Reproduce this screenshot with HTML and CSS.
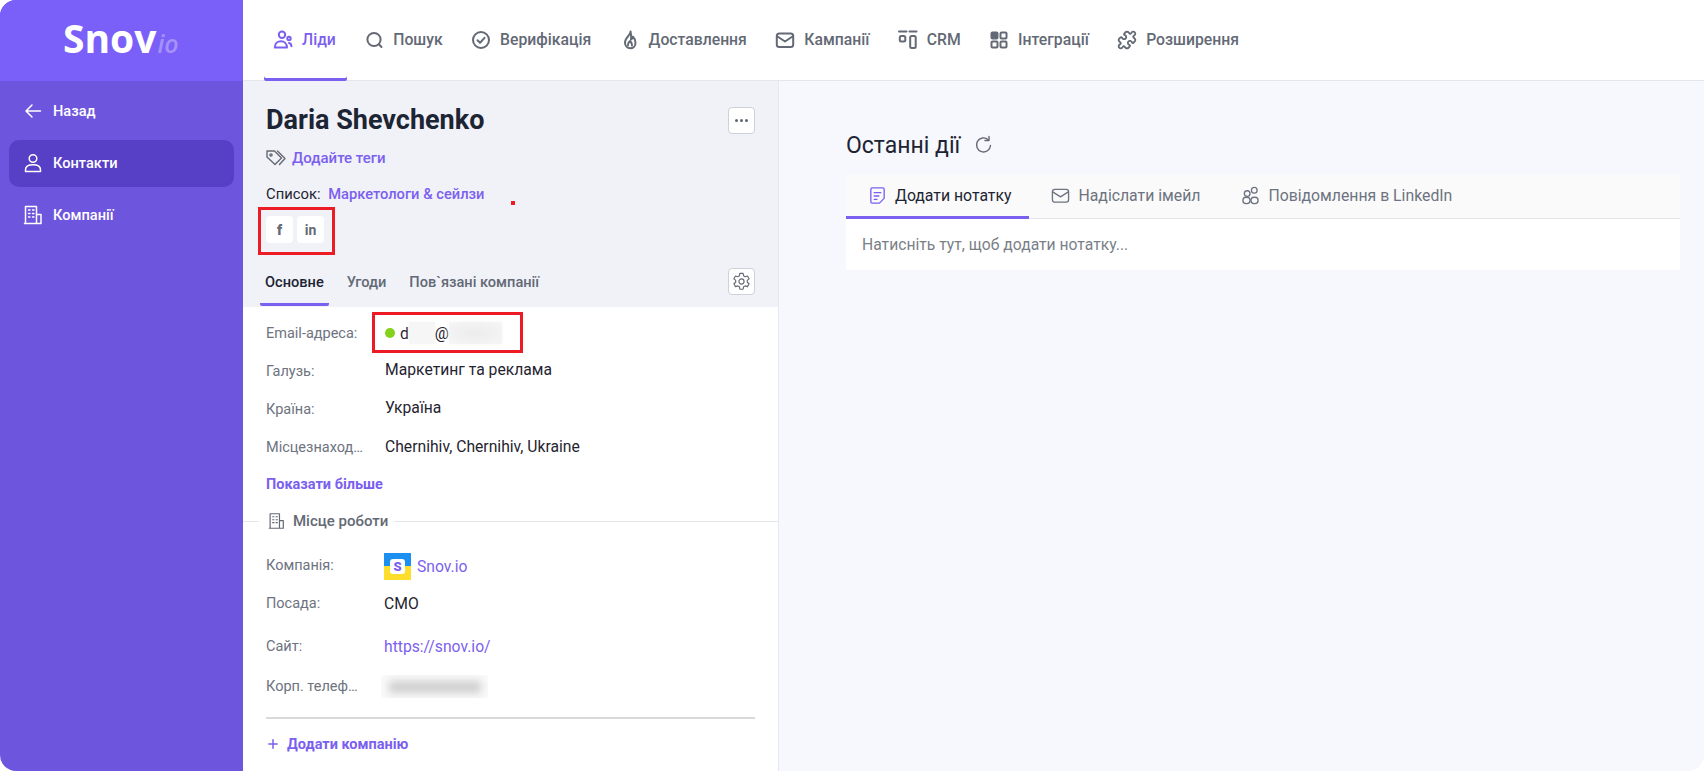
FILE: index.html
```html
<!DOCTYPE html>
<html lang="uk">
<head>
<meta charset="utf-8">
<title>Snov.io</title>
<link rel="stylesheet" href="styles.css">
</head>
<body>
<div class="app">
  <aside class="sidebar">
    <div class="logo"><span class="logo-main">Snov</span><span class="logo-io">io</span></div>
    <nav class="side-nav">
      <a class="side-item">
        <svg class="side-icon" viewBox="0 0 20 20"><path d="M17.500 10H3M9 4l-6 6 6 6"/></svg>Назад
      </a>
      <a class="side-item is-active">
        <svg class="side-icon" viewBox="0 0 20 20"><circle cx="10" cy="5.500" r="3.800"/><path d="M2.500 18.500v-1.700c0-3 2.800-5 7.500-5s7.500 2 7.500 5v1.700z"/></svg>Контакти
      </a>
      <a class="side-item">
        <svg class="side-icon" viewBox="0 0 20 20"><path d="M2.500 18.500V1.500h11v17zM13.500 9.500h4.500v9H1.500"/><path class="thick" d="M5.500 5h1.500M9.500 5h1.500M5.500 8.500h1.500M9.500 8.500h1.500M5.500 12h1.500M9.500 12h1.500"/></svg>Компанії
      </a>
    </nav>
  </aside>
  <div class="main">
    <header class="topbar">
      <a class="top-item is-active">
        <svg class="top-icon" viewBox="0 0 20 20"><circle cx="9" cy="4.800" r="3.200"/><path d="M1.800 17.500c0-4 3-6.300 6.200-6.300s5.800 2.300 6 6.300z"/><circle cx="16" cy="8.500" r="1.700"/><path d="M16 13c1.500.3 2.300 1.500 2.400 3.300"/></svg>Ліди
      </a>
      <a class="top-item">
        <svg class="top-icon" viewBox="0 0 20 20"><circle cx="10" cy="9.500" r="6.600"/><path d="M14.800 14.200l2.700 2.800"/></svg>Пошук
      </a>
      <a class="top-item">
        <svg class="top-icon" viewBox="0 0 20 20"><circle cx="10" cy="10" r="8"/><path d="M6.500 10.300l2.500 2.500 4.500-5"/></svg>Верифікація
      </a>
      <a class="top-item">
        <svg class="top-icon" viewBox="0 0 20 20"><path d="M10.500 1.500c.5 3.500-5.500 6-5.500 11 0 3.300 2.300 5.800 5.300 5.800s5.200-2.400 5.200-5.600c0-2.500-1-4.500-2.500-6-.3 1.400-1 2.400-2 2.800.6-2.800 0-6-.5-8z"/><path d="M8 15.500c-.6-2 .8-3 2-4.500 1 1.200 2.500 2.500 2 4.500"/></svg>Доставлення
      </a>
      <a class="top-item">
        <svg class="top-icon" viewBox="0 0 20 20"><rect x="1.800" y="3.500" width="16.400" height="13.500" rx="2.500"/><path d="M2.500 6.500l7.500 5 7.500-5"/></svg>Кампанії
      </a>
      <a class="top-item">
        <svg class="top-icon" viewBox="0 0 20 20"><path d="M1 1.500h7.500M11.500 1.500h7"/><rect x="1.800" y="6" width="5.500" height="5.500" rx="1.500"/><rect x="12.200" y="6" width="5.500" height="12" rx="1.500"/></svg>CRM
      </a>
      <a class="top-item">
        <svg class="top-icon" viewBox="0 0 20 20"><rect class="solid" x="2.500" y="2.500" width="6" height="6" rx="1"/><rect x="11.500" y="2.500" width="6" height="6" rx="1"/><rect x="2.500" y="11.500" width="6" height="6" rx="1"/><rect x="11.500" y="11.500" width="6" height="6" rx="1"/></svg>Інтеграції
      </a>
      <a class="top-item">
        <svg class="top-icon puzzle" viewBox="0 0 24 24"><path d="M19.439 7.85c-.049.322.059.648.289.878l1.568 1.568c.47.47.706 1.087.706 1.704s-.235 1.233-.706 1.704l-1.611 1.611a.98.98 0 0 1-.837.276c-.47-.07-.802-.48-.968-.925a2.501 2.501 0 1 0-3.214 3.214c.446.166.855.497.925.968a.979.979 0 0 1-.276.837l-1.61 1.61a2.404 2.404 0 0 1-1.705.707 2.402 2.402 0 0 1-1.704-.706l-1.568-1.568a1.026 1.026 0 0 0-.877-.29c-.493.074-.84.504-1.02.968a2.5 2.5 0 1 1-3.237-3.237c.464-.18.894-.527.967-1.02a1.026 1.026 0 0 0-.289-.877l-1.568-1.568A2.402 2.402 0 0 1 1.998 12c0-.617.236-1.234.706-1.704L4.230 8.770c.24-.24.581-.353.917-.303.515.077.877.528 1.073 1.01a2.500 2.500 0 1 0 3.259-3.259c-.482-.196-.933-.558-1.010-1.073-.05-.336.062-.676.303-.917l1.525-1.525A2.402 2.402 0 0 1 12 1.998c.617 0 1.234.236 1.704.706l1.568 1.568c.23.23.556.338.877.29.493-.074.84-.504 1.020-.968a2.500 2.500 0 1 1 3.237 3.237c-.464.18-.894.527-.967 1.020Z"/></svg>Розширення
      </a>
    </header>
    <div class="content">
      <section class="panel">
        <div class="panel-head">
          <div class="name-row">
            <h1 class="name">Daria Shevchenko</h1>
            <button class="square-btn"><span class="dots"><i></i><i></i><i></i></span></button>
          </div>
          <a class="tags">
            <svg class="tag-icon" viewBox="0 0 20 20"><path d="M1 3h7.500l7 7-6.500 6.500L1 9z"/><path d="M11.500 3l7.500 7.500-5.500 6"/><circle cx="5" cy="7" r="1.100"/></svg>Додайте теги
          </a>
          <p class="list-line">Список: <a class="link strong">Маркетологи &amp; сейлзи</a></p>
          <div class="socials">
            <a class="social"><span class="fb">f</span></a>
            <a class="social"><span class="in">in</span></a>
          </div>
          <div class="tabs">
            <a class="tab is-active">Основне</a>
            <a class="tab">Угоди</a>
            <a class="tab">Пов`язані компанії</a>
            <button class="square-btn gear">
              <svg class="gear-icon" viewBox="0 0 20 20"><path d="M8.300 1.500h3.400l.5 2.500 1.700 1 2.400-.8 1.700 3-1.900 1.600v2l1.900 1.600-1.700 3-2.400-.8-1.700 1-.5 2.500H8.300l-.5-2.500-1.700-1-2.400.8-1.700-3 1.900-1.600v-2L2 7.200l1.700-3 2.400.8 1.700-1z"/><circle cx="10" cy="10" r="2.700"/></svg>
            </button>
          </div>
        </div>
        <div class="panel-body">
          <div class="row">
            <span class="label">Email-адреса:</span>
            <span class="value email"><i class="dot"></i>d<i class="blur blur-a"></i>@<i class="blur blur-b"></i></span>
          </div>
          <div class="row">
            <span class="label">Галузь:</span>
            <span class="value raised">Маркетинг та реклама</span>
          </div>
          <div class="row">
            <span class="label">Країна:</span>
            <span class="value raised">Україна</span>
          </div>
          <div class="row">
            <span class="label">Місцезнаход…</span>
            <span class="value raised-1">Chernihiv, Chernihiv, Ukraine</span>
          </div>
          <a class="link strong more">Показати більше</a>
          <div class="section-title">
            <svg class="section-icon" viewBox="0 0 20 20"><path d="M2.500 18.500V1.500h11v17zM13.500 9.500h4.500v9H1.500"/><path class="thick" d="M5.500 5h1.500M9.500 5h1.500M5.500 8.500h1.500M9.500 8.500h1.500M5.500 12h1.500M9.500 12h1.500"/></svg>
            <span>Місце роботи</span>
          </div>
          <div class="work">
            <div class="row">
              <span class="label">Компанія:</span>
              <span class="value company"><span class="co-logo"><span class="co-s">S</span></span><a class="link">Snov.io</a></span>
            </div>
            <div class="row">
              <span class="label">Посада:</span>
              <span class="value">CMO</span>
            </div>
            <div class="row row-site">
              <span class="label">Сайт:</span>
              <a class="value link">https://snov.io/</a>
            </div>
            <div class="row row-phone">
              <span class="label">Корп. телеф…</span>
              <span class="phone"><i></i></span>
            </div>
          </div>
          <a class="add-company link strong">
            <svg class="plus" viewBox="0 0 12 12"><path d="M6 1v10M1 6h10"/></svg>Додати компанію
          </a>
        </div>
      </section>
      <section class="activity">
        <div class="activity-title">
          <h2>Останні дії</h2>
          <svg class="refresh" viewBox="0 0 20 20"><path d="M16.500 10.500a7 7 0 1 1-2.300-5.800"/><path d="M15 1.500v4h-4"/></svg>
        </div>
        <div class="card">
          <div class="card-tabs">
            <a class="card-tab is-active">
              <svg class="card-icon" viewBox="0 0 20 20"><path d="M4.500 2h11A1.500 1.500 0 0 1 17 3.500V13l-5 5H4.500A1.500 1.500 0 0 1 3 16.500v-13A1.500 1.500 0 0 1 4.500 2z"/><path d="M6.500 7h7M6.500 10.500h5M6.500 14h3"/></svg>Додати нотатку
            </a>
            <a class="card-tab">
              <svg class="card-icon" viewBox="0 0 20 20"><rect x="1.500" y="3.500" width="17" height="13.500" rx="2.500"/><path d="M2.200 6.500l7.800 5 7.800-5"/></svg>Надіслати імейл
            </a>
            <a class="card-tab">
              <svg class="card-icon" viewBox="0 0 20 20"><circle cx="6.500" cy="8" r="3"/><circle cx="14" cy="4.500" r="3"/><rect x="2" y="11.800" width="7.500" height="6.700" rx="3.300"/><rect x="10.500" y="11.800" width="7.500" height="6.700" rx="3.300"/></svg>Повідомлення в LinkedIn
            </a>
          </div>
          <div class="card-body">Натисніть тут, щоб додати нотатку...</div>
        </div>
      </section>
    </div>
  </div>
  <div class="mark mark-social"></div>
  <div class="mark mark-email"></div>
  <div class="mark-dot"></div>
</div>
</body>
</html>
```
FILE: styles.css
```css
* { box-sizing: border-box; }
html, body { margin: 0; height: 100%; background: #fff; }
body { font-family: Roboto, "Noto Sans", sans-serif; font-size: 14px; color: #1f2430; }
a { text-decoration: none; color: inherit; }
svg { display: block; fill: none; stroke: currentColor; stroke-linecap: round; stroke-linejoin: round; flex: none; }

.app { position: relative; display: flex; width: 1704px; height: 771px; overflow: hidden; border-radius: 16px; }

/* sidebar */
.sidebar { width: 243px; flex: none; background: #6e55dd; color: #fff; }
.logo { height: 81px; background: #7b5ff9; padding: 11px 0 0 63px; display: flex; align-items: baseline; font-family: "Open Sans", sans-serif; }
.logo-main { font-size: 39px; font-weight: 700; line-height: 54px; }
.logo-io { font-size: 25px; font-weight: 600; font-style: italic; color: rgba(255,255,255,.32); margin-left: 1px; }
.side-nav { padding: 7px 9px; display: flex; flex-direction: column; gap: 5px; }
.side-item { height: 47px; display: flex; align-items: center; gap: 10px; padding: 0 0 2px 14px; border-radius: 10px; font-weight: 500; font-size: 14.600px; }
.side-item.is-active { background: #573fc6; }
.side-icon { width: 20px; height: 20px; stroke-width: 1.500; }
.thick { stroke-width: 1.400; }

/* main */
.main { flex: 1; min-width: 0; display: flex; flex-direction: column; }
.topbar { height: 81px; flex: none; background: #fff; border-bottom: 1px solid #e4e6ec; padding-left: 21px; display: flex; }
.top-item { height: 81px; display: flex; align-items: center; gap: 9px; padding: 0 12px 2px 9px; margin-right: 7.400px; font-size: 15.750px; font-weight: 500; color: #636975; }
.top-item.is-active { color: #7b5fef; box-shadow: inset 0 -3px 0 #7b5fef; border-radius: 0 0 2px 2px; padding-right: 11px; margin-right: 8.400px; }
.top-icon { width: 20px; height: 20px; stroke-width: 2; }
.puzzle { stroke-width: 2.200; }
.solid { fill: currentColor; }

.content { flex: 1; display: flex; min-height: 0; }

/* left panel */
.panel { width: 536px; flex: none; background: #fff; border-right: 1px solid #e6e8ef; }
.panel-head { height: 226px; background: #f0f2f8; padding: 26px 23px 0 23px; }
.name-row { display: flex; align-items: center; justify-content: space-between; height: 27px; margin-bottom: 14px; }
.name { margin: 0; font-size: 27px; font-weight: 700; line-height: 27px; color: #1d2433; }
.square-btn { width: 27px; height: 27px; padding: 0; background: #fff; border: 1px solid #cfd1d8; border-radius: 4px; display: flex; align-items: center; justify-content: center; color: #636975; }
.dots { display: flex; gap: 2px; }
.dots i { width: 3px; height: 3px; border-radius: 50%; background: #5e6675; }
.tags { display: flex; align-items: center; gap: 6px; height: 20px; color: #7b5fef; font-weight: 500; font-size: 15px; }
.tag-icon { width: 20px; height: 20px; stroke-width: 1.400; color: #636975; }
.link { color: #7b5fef; }
.strong { font-weight: 500; }
.list-line { margin: 16px 0 0; line-height: 20px; font-size: 14.800px; color: #1f2430; }
.list-line .link { margin-left: 4px; font-size: 14.700px; }
.socials { display: flex; gap: 4px; margin-top: 12px; }
.social { width: 27px; height: 27px; background: #fff; border-radius: 4px; display: flex; align-items: center; justify-content: center; color: #636975; font-weight: 700; font-size: 14px; }
.fb { font-size: 14px; font-weight: 900; }
.tabs { display: flex; align-items: flex-start; gap: 13px; margin: 25px 0 0 -6px; }
.tab { height: 38px; padding: 0 5px; color: #636975; font-weight: 500; font-size: 14.600px; line-height: 28px; }
.tab.is-active { color: #1d2433; border-bottom: 3px solid #7b5fef; border-radius: 0 0 2px 2px; }
.gear { margin-left: auto; }
.gear-icon { width: 19px; height: 19px; stroke-width: 1.200; }

.panel-body { padding: 7px 23px 0 23px; }
.row { display: flex; align-items: center; height: 38px; }
.label { width: 119px; flex: none; color: #6d7380; font-size: 14.500px; }
.value { font-size: 15.700px; color: #1f2430; }
.value.link { color: #7b5fef; }
.raised { margin-bottom: 4px; }
.raised-1 { margin-bottom: 2px; }
.email { display: flex; align-items: center; }
.dot { width: 10px; height: 10px; border-radius: 50%; background: #84d11e; margin-right: 5px; }
.blur { display: block; background: #f6f6f6; box-shadow: 0 0 3px #f6f6f6; }
.blur-a { width: 26px; height: 22px; }
.blur-b { width: 53px; height: 22px; background: radial-gradient(ellipse at center, #ececec, #f6f6f6); box-shadow: 0 0 4px #f6f6f6; }
.more { display: block; line-height: 20px; margin-top: 9px; font-size: 14.500px; font-weight: 700; }
.section-title { display: flex; align-items: center; gap: 8px; height: 20px; margin: 16px -23px 0 -23px; padding-left: 25px; color: #636975; font-size: 15px; font-weight: 500; background: linear-gradient(#e4e6ea, #e4e6ea) 0 50% / 100% 1px no-repeat; }
.section-title span { background: #fff; padding: 0 6px 0 8px; margin-left: -8px; }
.section-title svg { box-sizing: content-box; background: #fff; padding: 0 0 0 9px; margin-left: -9px; }
.section-icon { width: 17px; height: 18px; stroke-width: 1.400; }
.work { margin-top: 15px; }
.work .value { margin-left: -1px; }
.company { display: flex; align-items: center; gap: 6px; margin-bottom: -2px; }
.co-logo { width: 27px; height: 27px; display: flex; align-items: center; justify-content: center; background: linear-gradient(#1c8ff0 50%, #fdde2d 50%); }
.co-s { width: 15px; height: 15px; background: #fff; border-radius: 3px; color: #7b5fef; font-size: 13px; font-weight: 900; line-height: 15px; text-align: center; }
.row-site { margin-top: 5px; }
.row-phone { margin-top: 2px; }
.phone { display: block; width: 107px; height: 23px; margin-left: -4px; overflow: hidden; background: #fafafa; }
.phone i { display: block; width: 92px; height: 12px; margin: 6px 0 0 8px; background: #cdcdcf; filter: blur(4px); }
.add-company { position: relative; display: flex; align-items: center; gap: 9px; height: 20px; margin-top: 29px; padding-left: 2px; font-size: 14.500px; font-weight: 700; }
.add-company::before { content: ""; position: absolute; left: 0; right: 0; top: -17px; height: 2px; background: #d9d9dc; }
.plus { width: 10px; height: 10px; stroke-width: 1.800; }

/* activity */
.activity { flex: 1; min-width: 0; background: #f7f8fd; padding: 49px 24px 0 67px; }
.activity-title { display: flex; align-items: center; gap: 14px; height: 30px; margin-bottom: 15px; }
.activity-title h2 { margin: 0; font-size: 23px; font-weight: 400; color: #1d2433; }
.refresh { width: 20px; height: 20px; color: #636975; stroke-width: 1.400; }
.card { background: #fff; height: 95px; }
.card-tabs { height: 44px; display: flex; background: #fafafa; border-bottom: 1px solid #e4e6ea; }
.card-tab { height: 44px; display: flex; align-items: center; gap: 8px; padding: 0 19px 3px 22px; font-size: 15.800px; color: #6d7380; }
.card-tab.is-active { color: #1d2433; border-bottom: 3px solid #7b5fef; padding: 0 18px 0 22px; }
.card-tab.is-active .card-icon { color: #7b5fef; }
.card-icon { width: 19px; height: 19px; stroke-width: 1.400; }
.card-body { padding: 16px; line-height: 20px; font-size: 15.700px; color: #7a7f88; }

/* red annotations */
.mark { position: absolute; border: 3px solid #ed1c24; }
.mark-social { left: 258px; top: 207px; width: 77px; height: 48px; }
.mark-email { left: 372px; top: 312px; width: 151px; height: 41px; }
.mark-dot { position: absolute; left: 511px; top: 201px; width: 4px; height: 4px; background: #ed1c24; }
```
